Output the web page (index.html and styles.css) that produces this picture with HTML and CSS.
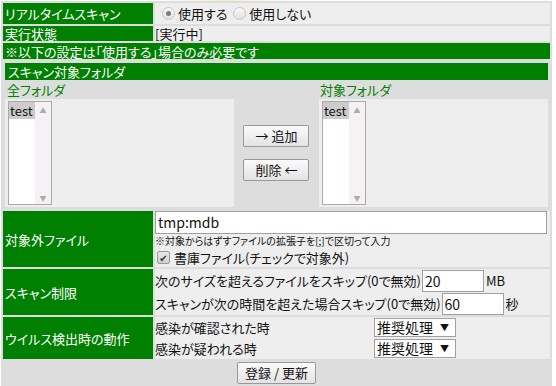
FILE: index.html
```html
<!DOCTYPE html>
<html lang="ja">
  <head>
    <meta charset="UTF-8" />
    <title>リアルタイムスキャン設定</title>
    <link rel="stylesheet" href="styles.css">
  </head>
  <body>

    <table class="settings">
      <tr class="row-mode">
        <th>リアルタイムスキャン</th>
        <td>
          <label class="choice"><span class="radio checked"></span>使用する</label>
          <label class="choice"><span class="radio"></span>使用しない</label>
        </td>
      </tr>
      <tr class="row-state">
        <th>実行状態</th>
        <td>[実行中]</td>
      </tr>
      <tr class="row-notice">
        <th colspan="2">※以下の設定は「使用する」場合のみ必要です</th>
      </tr>
      <tr>
        <td colspan="2" class="folders-cell">
          <table class="folders">
            <tr class="folders-head">
              <th colspan="3">スキャン対象フォルダ</th>
            </tr>
            <tr class="folders-labels">
              <td>全フォルダ</td>
              <td></td>
              <td>対象フォルダ</td>
            </tr>
            <tr class="folders-lists">
              <td class="list-cell">
                <div class="listbox">
                  <div class="options"><div class="option selected">test</div></div>
                  <div class="scroll"><span>▲</span><span>▼</span></div>
                </div>
              </td>
              <td class="move-cell">
                <button class="btn move">→ 追加</button>
                <button class="btn move">削除 ←</button>
              </td>
              <td class="list-cell">
                <div class="listbox">
                  <div class="options"><div class="option selected">test</div></div>
                  <div class="scroll"><span>▲</span><span>▼</span></div>
                </div>
              </td>
            </tr>
          </table>
        </td>
      </tr>
      <tr class="row-exclude">
        <th>対象外ファイル</th>
        <td>
          <div class="field wide">tmp:mdb</div>
          <div class="note">※対象からはずすファイルの拡張子を[;]で区切って入力</div>
          <label class="check-line"><span class="checkbox">✔</span>書庫ファイル(チェックで対象外)</label>
        </td>
      </tr>
      <tr class="row-limit">
        <th>スキャン制限</th>
        <td>
          <div class="limit-line">次のサイズを超えるファイルをスキップ(0で無効)<span class="field small">20</span>MB</div>
          <div class="limit-line">スキャンが次の時間を超えた場合スキップ(0で無効)<span class="field small">60</span>秒</div>
        </td>
      </tr>
      <tr class="row-action">
        <th>ウイルス検出時の動作</th>
        <td>
          <div class="action-grid">
            <span>感染が確認された時</span>
            <span class="dropdown">推奨処理<i>▼</i></span>
            <span>感染が疑われる時</span>
            <span class="dropdown">推奨処理<i>▼</i></span>
          </div>
        </td>
      </tr>
      <tr class="row-submit">
        <td colspan="2"><button class="btn submit">登録 / 更新</button></td>
      </tr>
    </table>

  </body>
</html>
```

FILE: styles.css
```css
body {
  margin: 0;
  font-family: "Noto Sans CJK JP", "DejaVu Sans", sans-serif;
  font-size: 13px;
  font-feature-settings: "palt";
  color: #111;
  background-color: #fff;
  background-image:
    linear-gradient(90deg, rgba(255,255,255,0), #f7edc4 50%, rgba(255,255,255,0)),
    linear-gradient(90deg, rgba(255,255,255,0), #9cc45a 50%, rgba(255,255,255,0));
  background-size: 150px 3px, 130px 3px;
  background-position: 150px 0, 160px 383px;
  background-repeat: no-repeat;
}

.settings {
  margin: 1px 0 0 1px;
  width: 551px;
  border-spacing: 2px;
  background-color: #ddd;
}
.settings th,
.settings td {
  padding: 0;
  line-height: 15px;
  text-align: left;
  font-weight: normal;
  vertical-align: middle;
}
.settings > tbody > tr > th {
  width: 148px;
  padding-left: 2px;
  background-color: #008000;
  color: #fff;
}
.settings > tbody > tr > td {
  background-color: #eee;
}

.row-mode th,
.row-mode td {
  height: 21px;
}
.row-state th,
.row-state td {
  height: 15px;
}
.row-notice th {
  height: 16px;
}

.choice {
  display: inline-flex;
  align-items: center;
  height: 15px;
  margin-left: 7px;
  vertical-align: top;
}
.choice + .choice {
  margin-left: 3px;
}
.radio {
  display: inline-block;
  width: 11px;
  height: 11px;
  margin-right: 3px;
  border: 1px solid #c4c4c4;
  border-radius: 50%;
  background: linear-gradient(#fafafa, #e2e2e2);
  position: relative;
}
.radio.checked::after {
  content: "";
  position: absolute;
  left: 3px;
  top: 3px;
  width: 5px;
  height: 5px;
  border-radius: 50%;
  background-color: #7c7c7c;
}

/* folder selection block */
.settings td.folders-cell {
  background-color: #ddd;
}
.folders {
  width: 100%;
  border-spacing: 2px;
}
.folders-head th {
  height: 17px;
  padding-left: 3px;
  background-color: #008000;
  color: #fff;
}
.folders-labels td {
  height: 15px;
  color: #008000;
  padding-left: 2px;
}
.folders-labels td:last-child {
  padding-left: 1px;
}
.folders-labels td:nth-child(2) {
  width: 79px;
}
.list-cell {
  width: 231px;
  height: 108px;
  background-color: #eee;
}
.settings td.list-cell {
  vertical-align: top;
}
.listbox {
  display: flex;
  width: 42px;
  height: 102px;
  margin: 2px 0 0 3px;
  border: 1px solid #aaa;
  background-color: #fff;
}
.options {
  width: 26px;
}
.option {
  height: 17px;
  line-height: 17px;
  padding-left: 1px;
  font-size: 13px;
}
.option.selected {
  background-color: #ccc;
}
.scroll {
  flex: 1;
  display: flex;
  flex-direction: column;
  justify-content: space-between;
  align-items: center;
  padding: 4px 0 2px;
  background-color: #f5f1f5;
  color: #aaa;
  font-size: 7px;
  line-height: 8px;
}
.settings td.move-cell {
  text-align: center;
}

.btn {
  display: block;
  margin: 0 auto;
  height: 22px;
  padding: 0;
  border: 1px solid #999;
  border-radius: 2px;
  background: linear-gradient(#fbfbfb, #e3e3e3);
  font-family: inherit;
  font-size: 13px;
  line-height: 18px;
  color: #111;
}
.move {
  width: 66px;
}
.move + .move {
  margin-top: 12px;
}

/* exclude files */
.row-exclude th,
.row-exclude td {
  height: 56px;
}
.field {
  display: inline-block;
  box-sizing: border-box;
  border: 1px solid #a0a0a0;
  background-color: #fff;
  font-size: 14px;
  line-height: 20px;
  padding-left: 2px;
}
.field.wide {
  display: block;
  width: 392px;
  height: 23px;
}
.note {
  font-size: 10px;
  line-height: 14px;
}
.check-line {
  display: flex;
  align-items: center;
  height: 19px;
  line-height: 19px;
  margin-left: 2px;
}
.checkbox {
  display: inline-block;
  box-sizing: border-box;
  width: 13px;
  height: 13px;
  margin-right: 4px;
  border: 1px solid #9a9a9a;
  border-radius: 2px;
  background: linear-gradient(#e8e8e8, #cfcfcf);
  color: #333;
  font-size: 10px;
  line-height: 11px;
  text-align: center;
}

/* scan limits */
.row-limit th,
.row-limit td {
  height: 46px;
}
.limit-line {
  display: flex;
  align-items: center;
  height: 22px;
}
.limit-line + .limit-line {
  margin-top: 1px;
}
.field.small {
  width: 62px;
  height: 22px;
  margin: 0 2px 0 1px;
}

/* detection action */
.row-action th,
.row-action td {
  height: 42px;
}
.action-grid {
  display: grid;
  grid-template-columns: 219px 82px;
  row-gap: 2px;
  align-items: center;
}
.dropdown {
  display: flex;
  justify-content: space-between;
  align-items: center;
  box-sizing: border-box;
  height: 19px;
  padding: 0 6px 0 2px;
  border: 1px solid #a0a0a0;
  background-color: #fff;
  font-size: 14px;
  line-height: 17px;
}
.dropdown i {
  font-style: normal;
  font-size: 9px;
}

.settings > tbody > tr.row-submit > td {
  height: 23px;
  background-color: #ddd;
}
.submit {
  width: 79px;
}
```
